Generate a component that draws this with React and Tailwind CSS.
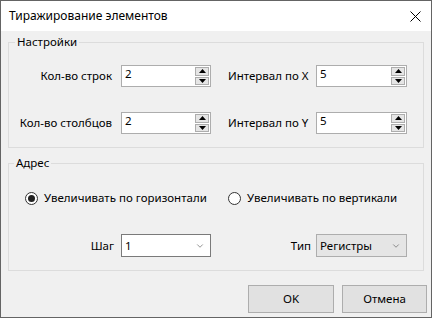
import { ChevronDown } from 'lucide-react'

const font = { fontFamily: '"Segoe UI", "Noto Sans", sans-serif' }

function Spinner({ value, width = 'w-[90px]' }) {
  return (
    <div className={`${width} h-[22px] bg-white border border-[#adadad] flex items-stretch`}>
      <div className="flex-1 pl-[3px] text-[11.5px] leading-[16px] text-black">{value}</div>
      <div className="w-[14px] mr-[1px] my-[1px] flex flex-col gap-[1px]">
        <div className="flex-1 bg-[#e5e5e5] border border-[#adadad] flex items-center justify-center">
          <svg width="7" height="4" viewBox="0 0 7 4"><path d="M3.5 0 L7 4 L0 4 Z" fill="#000" /></svg>
        </div>
        <div className="flex-1 bg-[#e5e5e5] border border-[#adadad] flex items-center justify-center">
          <svg width="7" height="4" viewBox="0 0 7 4"><path d="M0 0 L7 0 L3.5 4 Z" fill="#000" /></svg>
        </div>
      </div>
    </div>
  )
}

function Combo({ value, gray, width = 'w-[90px]' }) {
  return (
    <div
      className={`${width} h-[23px] border flex items-center justify-between pl-[3px] pr-[5px] ${
        gray ? 'bg-[#e5e5e5] border-[#adadad]' : 'bg-white border-[#7a7a7a]'
      }`}
    >
      <span className="text-[11.5px] text-black">{value}</span>
      <ChevronDown className="w-[10px] h-[10px] text-[#555]" strokeWidth={1.5} />
    </div>
  )
}

function Radio({ checked, label }) {
  return (
    <div className="flex items-center gap-[6px]">
      <div className="w-[13px] h-[13px] rounded-full border border-[#333] bg-white flex items-center justify-center">
        {checked && <div className="w-[7px] h-[7px] rounded-full bg-[#222]" />}
      </div>
      <span className="text-[11.5px] text-black whitespace-nowrap">{label}</span>
    </div>
  )
}

export default function App() {
  return (
    <div className="w-[432px] h-[318px] overflow-hidden border border-[#646464] bg-[#f0f0f0] flex flex-col text-black" style={font}>
      {/* Title bar */}
      <div className="h-[30px] bg-white flex items-center justify-between pl-[8px] pr-[10px] shrink-0">
        <span className="text-[12px]">Тиражирование элементов</span>
        <svg width="11" height="11" viewBox="0 0 11 11">
          <path d="M0.5 0.5 L10.5 10.5 M10.5 0.5 L0.5 10.5" stroke="#000" strokeWidth="1" />
        </svg>
      </div>

      {/* Settings */}
      <fieldset className="mt-[3px] mx-[7px] border border-[#dcdcdc] pt-[15px] pb-[13px] shrink-0">
        <legend className="ml-[6px] px-[2px] text-[11.5px] leading-[16px]">Настройки</legend>
        <div className="flex flex-col gap-[25px]">
          <div className="flex items-center h-[22px]">
            <span className="w-[103px] text-right text-[11.5px] whitespace-nowrap">Кол-во строк</span>
            <div className="ml-[9px]"><Spinner value="2" /></div>
            <span className="ml-[17px] w-[79px] text-[11.5px] whitespace-nowrap">Интервал по X</span>
            <div className="ml-[9px]"><Spinner value="5" width="w-[91px]" /></div>
          </div>
          <div className="flex items-center h-[22px]">
            <span className="w-[103px] text-right text-[11.5px] whitespace-nowrap">Кол-во столбцов</span>
            <div className="ml-[9px]"><Spinner value="2" /></div>
            <span className="ml-[17px] w-[79px] text-[11.5px] whitespace-nowrap">Интервал по Y</span>
            <div className="ml-[9px]"><Spinner value="5" width="w-[91px]" /></div>
          </div>
        </div>
      </fieldset>

      {/* Address */}
      <fieldset className="mt-[7px] mx-[7px] border border-[#dcdcdc] pt-[19px] pb-[13px] shrink-0">
        <legend className="ml-[5px] px-[2px] text-[11.5px] leading-[16px]">Адрес</legend>
        <div className="flex items-center h-[16px]">
          <div className="ml-[16px] w-[203px]">
            <Radio checked label="Увеличивать по горизонтали" />
          </div>
          <Radio label="Увеличивать по вертикали" />
        </div>
        <div className="flex items-center mt-[28px]">
          <span className="w-[105px] text-right text-[11.5px]">Шаг</span>
          <div className="ml-[7px]"><Combo value="1" /></div>
          <span className="ml-[17px] w-[83px] text-right text-[11.5px]">Тип</span>
          <div className="ml-[5px]"><Combo value="Регистры" gray width="w-[91px]" /></div>
        </div>
      </fieldset>

      {/* Buttons */}
      <div className="mt-[14px] flex justify-end gap-[8px] pr-[4px] shrink-0">
        <button className="w-[86px] h-[28px] bg-[#e1e1e1] border border-[#adadad] text-[11.5px]">OK</button>
        <button className="w-[85px] h-[28px] bg-[#e1e1e1] border border-[#adadad] text-[11.5px]">Отмена</button>
      </div>
    </div>
  )
}
